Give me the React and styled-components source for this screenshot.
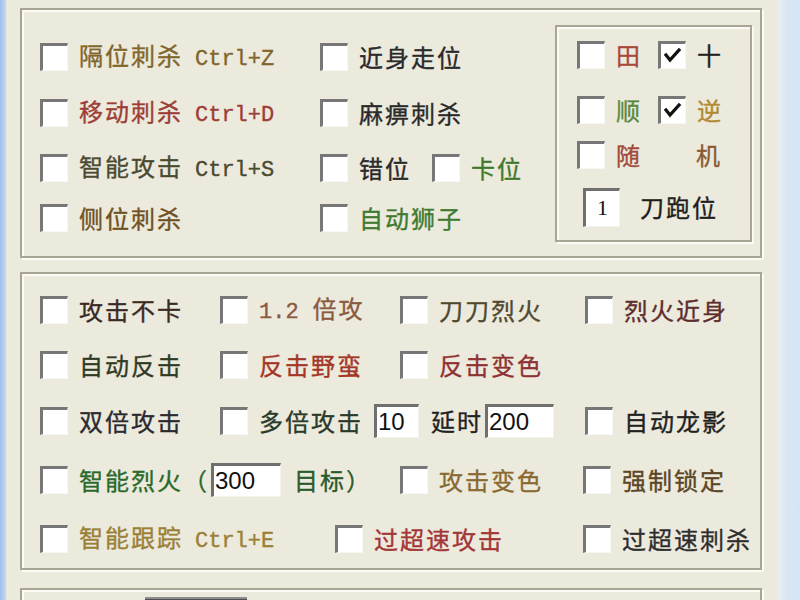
import React from "react";
import styled, { createGlobalStyle } from "styled-components";

const Global = createGlobalStyle`
  html, body { margin: 0; padding: 0; background: #ece9dd; }
  body { font-family: "Noto Sans CJK SC", "Noto Sans", sans-serif; }
`;

const Screen = styled.div`
  display: flex;
  width: 800px;
  height: 600px;
  overflow: hidden;
`;
const LeftEdge = styled.div`
  flex: none;
  width: 6px;
  background: linear-gradient(to right, #9dbfea, #c4d8f2);
`;
const RightEdge = styled.div`
  flex: none;
  width: 22px;
  background: linear-gradient(to right, #ebeeee, #d9e7f4 40%, #d3e5f6);
`;
const Dialog = styled.div`
  flex: 1;
  display: flex;
  flex-direction: column;
  padding: 8px 16px 0 14px;
  background: #ece9dd;
`;

const GroupBox = styled.div`
  flex: none;
  box-sizing: border-box;
  height: ${(p) => p.h}px;
  margin-bottom: ${(p) => p.mb || 0}px;
  border: 2px solid #a8a595;
  box-shadow: inset 2px 2px 0 #fbfaf5, 2px 2px 0 #fbfaf5;
`;

const TopGroup = styled(GroupBox)`
  display: flex;
  padding: 15px 8px 0 18px;
`;
const OptionArea = styled.div`
  flex: 1;
  padding-top: 4px;
`;
const ListGroup = styled(GroupBox)`
  padding: 9px 0 0 18px;
`;
const BottomGroup = styled(GroupBox)`
  padding: 7px 0 0 123px;
`;

const Row = styled.div`
  display: flex;
  align-items: center;
  height: ${(p) => p.h}px;
`;
const Cell = styled.div`
  flex: none;
  display: flex;
  align-items: center;
  width: ${(p) => (p.w ? `${p.w}px` : "auto")};
`;

const Box = styled.span`
  position: relative;
  flex: none;
  box-sizing: border-box;
  width: 28px;
  height: 28px;
  background: #fff;
  border-top: 3px solid #777;
  border-left: 3px solid #777;
  border-right: 1px solid #f7f7f3;
  border-bottom: 1px solid #f7f7f3;
  svg {
    position: absolute;
    left: 2px;
    top: 2px;
  }
`;

const Label = styled.span`
  margin-left: ${(p) => (p.ml === undefined ? 11 : p.ml)}px;
  font-size: 24px;
  line-height: 1;
  letter-spacing: 2px;
  white-space: nowrap;
  color: ${(p) => p.c || "#2a2a2a"};
  -webkit-text-stroke: 0.35px currentColor;
`;
const Mono = styled.span`
  margin-left: ${(p) => p.ml || 0}px;
  font-family: "Liberation Mono", monospace;
  font-size: 22px;
  letter-spacing: 0;
`;

const Field = styled.span`
  flex: none;
  box-sizing: border-box;
  display: flex;
  align-items: center;
  width: ${(p) => p.w}px;
  height: ${(p) => p.h || 34}px;
  margin-left: ${(p) => p.ml || 0}px;
  padding-left: ${(p) => p.pl || 1}px;
  background: #fff;
  border-top: 3px solid #6f6f6f;
  border-left: 3px solid #6f6f6f;
  border-right: 1px solid #f4f4ef;
  border-bottom: 1px solid #f4f4ef;
  font-family: ${(p) =>
    p.serif ? '"Liberation Serif", serif' : '"Liberation Sans", sans-serif'};
  font-size: ${(p) => (p.serif ? 22 : 24)}px;
  color: #111;
`;

const InnerBox = styled.div`
  flex: none;
  box-sizing: border-box;
  width: 197px;
  height: 217px;
  padding-left: 20px;
  border: 2px solid #a8a595;
  box-shadow: inset 2px 2px 0 #fbfaf5, 2px 2px 0 #fbfaf5;
`;
const InnerRow = styled.div`
  display: flex;
  align-items: center;
  height: ${(p) => p.h || 30}px;
  margin-top: ${(p) => p.mt}px;
`;

const DarkBar = styled.div`
  width: 102px;
  height: 30px;
  background: #4f4f4f;
  border-top: 2px solid #8d8d8d;
`;

function Check({ on }) {
  return (
    <Box>
      {on && (
        <svg width="20" height="20" viewBox="0 0 20 20">
          <polyline
            points="3,9 7,14 16,4"
            fill="none"
            stroke="#111"
            strokeWidth="3.2"
            strokeLinecap="square"
          />
        </svg>
      )}
    </Box>
  );
}

function Option({ w, c, text, keys, on }) {
  return (
    <Cell w={w}>
      <Check on={on} />
      <Label c={c}>
        {text}
        {keys && <Mono ml={12}>{keys}</Mono>}
      </Label>
    </Cell>
  );
}

export default function App() {
  return (
    <>
      <Global />
      <Screen>
        <LeftEdge />
        <Dialog>
          <TopGroup h={250} mb={14}>
            <OptionArea>
              <Row h={56}>
                <Option w={280} c="#80662a" text="隔位刺杀" keys="Ctrl+Z" />
                <Option text="近身走位" />
              </Row>
              <Row h={56}>
                <Option w={280} c="#9c3d36" text="移动刺杀" keys="Ctrl+D" />
                <Option text="麻痹刺杀" />
              </Row>
              <Row h={54}>
                <Option w={280} c="#4a4a30" text="智能攻击" keys="Ctrl+S" />
                <Option w={112} text="错位" />
                <Option c="#3e7a2c" text="卡位" />
              </Row>
              <Row h={46}>
                <Option w={280} c="#6f5222" text="侧位刺杀" />
                <Option c="#3e7a30" text="自动狮子" />
              </Row>
            </OptionArea>
            <InnerBox>
              <InnerRow mt={13}>
                <Option w={81} c="#a8483a" text="田" />
                <Option on c="#1e1e1e" text="十" />
              </InnerRow>
              <InnerRow mt={25}>
                <Option w={81} c="#5a8a3a" text="顺" />
                <Option on c="#b08a30" text="逆" />
              </InnerRow>
              <InnerRow mt={15}>
                <Check />
                <Label c="#a04a3a">随</Label>
                <Label ml={54} c="#8a5a30">机</Label>
              </InnerRow>
              <InnerRow mt={17} h={40}>
                <Field w={37} h={39} ml={6} pl={11} serif>
                  1
                </Field>
                <Label ml={20} c="#1e1e1e">
                  刀跑位
                </Label>
              </InnerRow>
            </InnerBox>
          </TopGroup>

          <ListGroup h={298} mb={18}>
            <Row h={54}>
              <Option w={180} c="#3a2a25" text="攻击不卡" />
              <Cell w={180}>
                <Check />
                <Label c="#8a5a40">
                  <Mono>1.2</Mono>
                  <span style={{ marginLeft: 14 }}>倍攻</span>
                </Label>
              </Cell>
              <Option w={185} c="#504a30" text="刀刀烈火" />
              <Option c="#5e2d2d" text="烈火近身" />
            </Row>
            <Row h={56}>
              <Option w={180} c="#2f3a25" text="自动反击" />
              <Option w={180} c="#a33626" text="反击野蛮" />
              <Option w={185} c="#8e3232" text="反击变色" />
            </Row>
            <Row h={56}>
              <Option w={180} c="#2a2a30" text="双倍攻击" />
              <Cell w={365}>
                <Check />
                <Label c="#2a3a2a">多倍攻击</Label>
                <Field w={45} ml={11}>
                  10
                </Field>
                <Label ml={12} c="#222">
                  延时
                </Label>
                <Field w={69} ml={2}>
                  200
                </Field>
              </Cell>
              <Option c="#222" text="自动龙影" />
            </Row>
            <Row h={62}>
              <Cell w={360}>
                <Check />
                <Label c="#2a6a2a">智能烈火（</Label>
                <Field w={70} ml={2}>
                  300
                </Field>
                <Label ml={13} c="#2a5a2a">
                  目标）
                </Label>
              </Cell>
              <Option w={183} c="#8a6a30" text="攻击变色" />
              <Option c="#5a4525" text="强制锁定" />
            </Row>
            <Row h={56}>
              <Option w={295} c="#9a8035" text="智能跟踪" keys="Ctrl+E" />
              <Option w={248} c="#a33636" text="过超速攻击" />
              <Option c="#2e2e2e" text="过超速刺杀" />
            </Row>
          </ListGroup>

          <BottomGroup h={60}>
            <DarkBar />
          </BottomGroup>
        </Dialog>
        <RightEdge />
      </Screen>
    </>
  );
}
